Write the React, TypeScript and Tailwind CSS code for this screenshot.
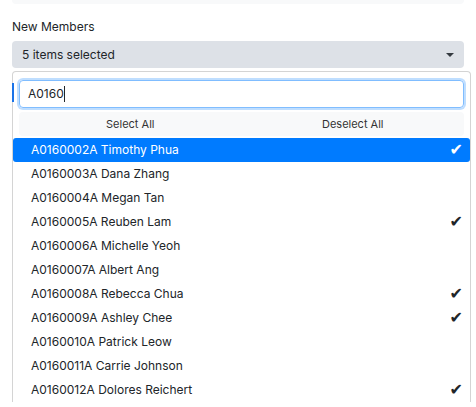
import React from "react";

const members = [
  { id: "A0160002A", name: "Timothy Phua", selected: true, active: true },
  { id: "A0160003A", name: "Dana Zhang", selected: false },
  { id: "A0160004A", name: "Megan Tan", selected: false },
  { id: "A0160005A", name: "Reuben Lam", selected: true },
  { id: "A0160006A", name: "Michelle Yeoh", selected: false },
  { id: "A0160007A", name: "Albert Ang", selected: false },
  { id: "A0160008A", name: "Rebecca Chua", selected: true },
  { id: "A0160009A", name: "Ashley Chee", selected: true },
  { id: "A0160010A", name: "Patrick Leow", selected: false },
  { id: "A0160011A", name: "Carrie Johnson", selected: false },
  { id: "A0160012A", name: "Dolores Reichert", selected: true },
];

export default function App() {
  return (
    <div
      className="w-[476px] h-[407px] overflow-hidden bg-white text-[#212529]"
      style={{ fontFamily: "Inter, 'Liberation Sans', sans-serif" }}
    >
      <div className="px-3">
        {/* bottom edge of the previous panel */}
        <div className="h-[4px] bg-[#f8f9fa] rounded-b" />

        <div className="pt-[14px] text-[12px] leading-[18px]">New Members</div>

        <div className="mt-[5px] h-[27px] rounded bg-[#dde1e7] flex items-center justify-between pl-[10px] pr-[10px] text-[12px]">
          <span>5 items selected</span>
          <span className="w-0 h-0 border-l-[4px] border-r-[4px] border-t-[4px] border-l-transparent border-r-transparent border-t-[#343a40]" />
        </div>

        <div className="relative mt-[3px] w-[459px] border border-[#d4d4d4] border-b-0 rounded-t pt-[8px]">
          <span className="absolute left-[-1px] top-[11px] h-[19px] w-[2px] bg-[#1a73e8]" />
          <div className="px-[6px]">
            <div className="h-[28px] rounded border border-[#80bdff] shadow-[0_0_0_2px_rgba(0,123,255,0.25)] flex items-center pl-[8px] text-[12px]">
              A0160<span className="w-px h-[16px] bg-[#212529]" />
            </div>
            <div className="mt-[4px] h-[24px] rounded bg-[#f8f9fa] grid grid-cols-2 text-[11px] text-[#333]">
              <div className="flex items-center justify-center">Select All</div>
              <div className="flex items-center justify-center">Deselect All</div>
            </div>
          </div>
          <ul className="mt-[2px]">
            {members.map((m) => (
              <li
                key={m.id}
                className={
                  "h-[24px] flex items-center justify-between pl-[18px] pr-[7px] text-[12px] " +
                  (m.active ? "bg-[#007bff] text-white rounded-[3px]" : "")
                }
              >
                <span>
                  {m.id} {m.name}
                </span>
                {m.selected && (
                  <span className="text-[16px] leading-none" style={{ fontFamily: "'DejaVu Sans', sans-serif" }}>
                    ✔
                  </span>
                )}
              </li>
            ))}
          </ul>
        </div>
      </div>
    </div>
  );
}
